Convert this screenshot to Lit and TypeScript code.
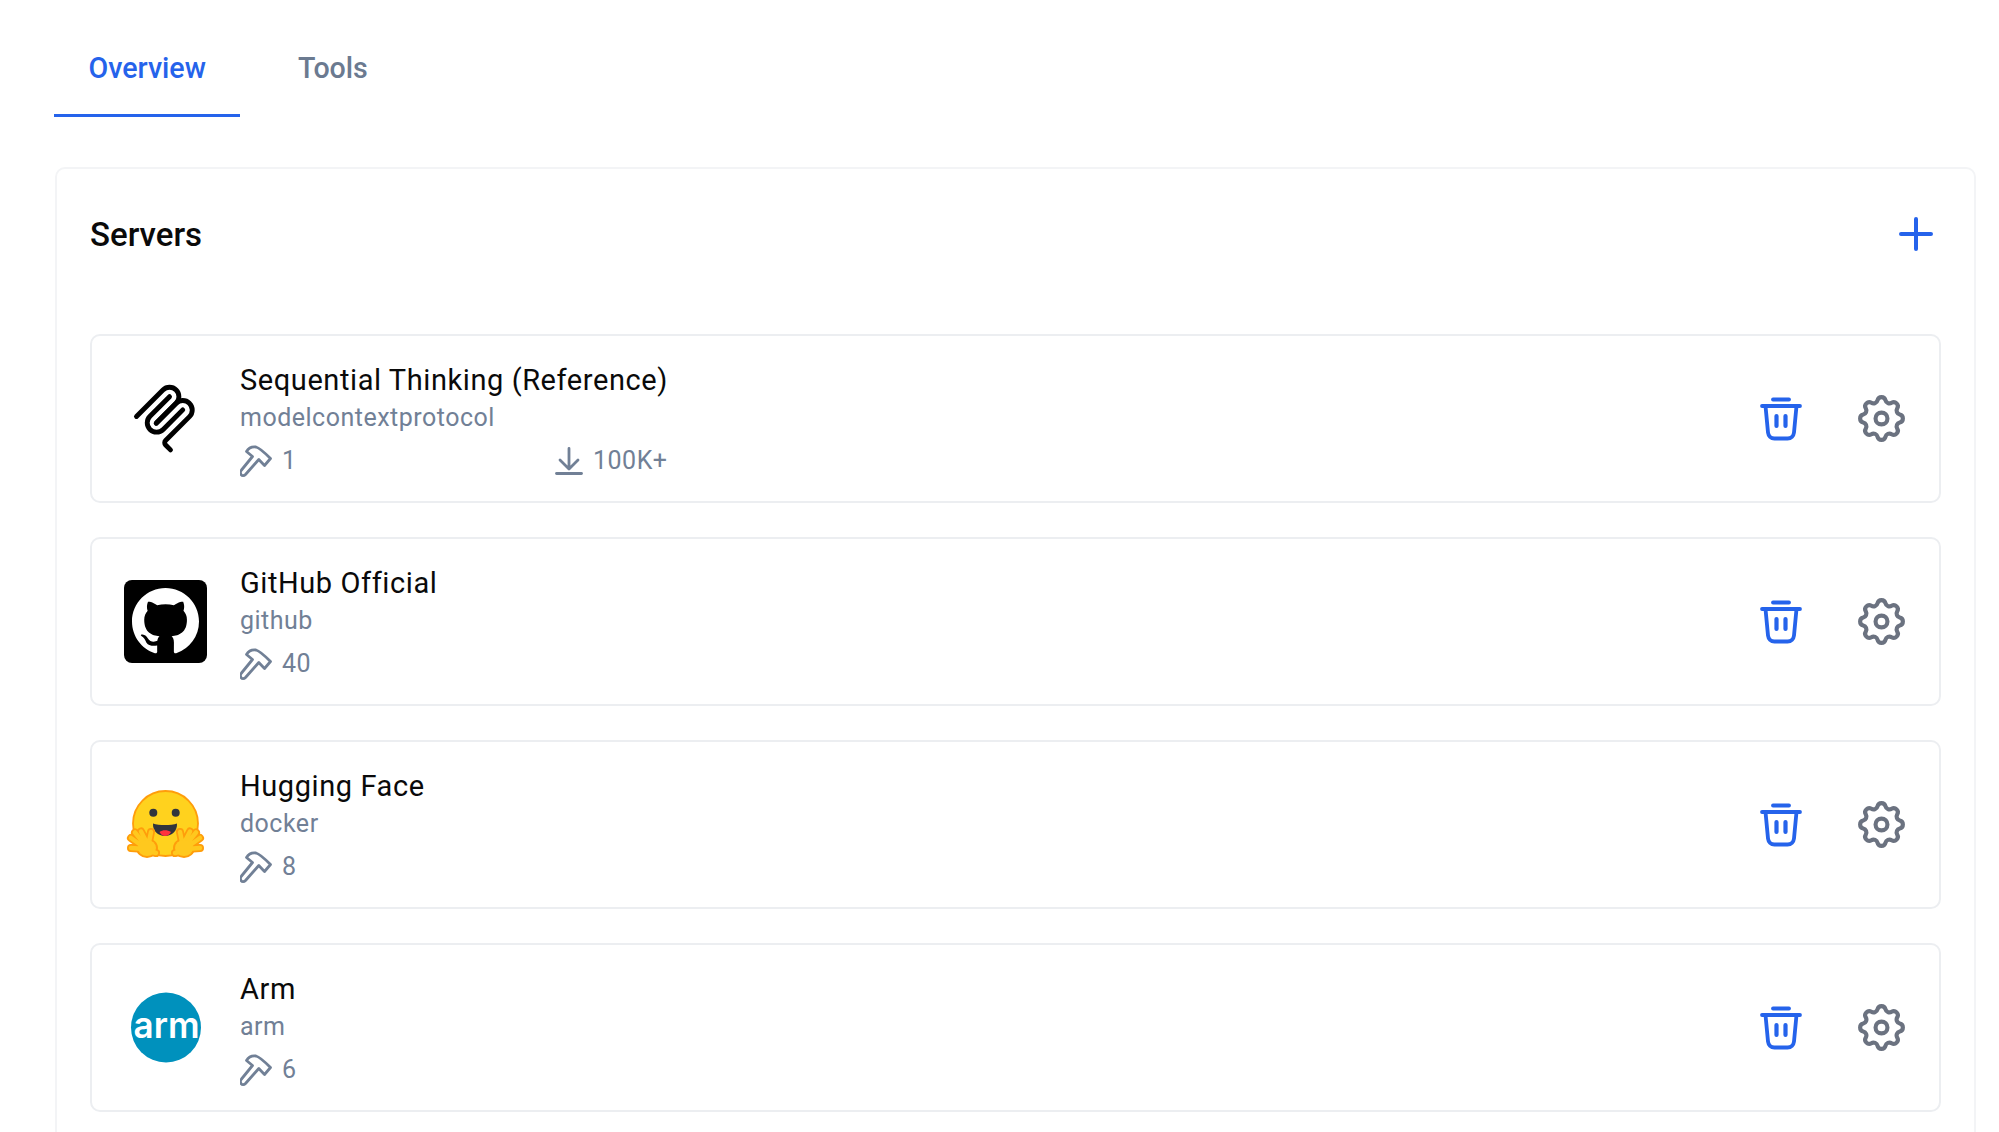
import { LitElement, html, css, svg } from 'lit'
import { customElement, property } from 'lit/decorators.js'

const hammerIcon = html`<svg class="meta-icon" viewBox="0 0 32 34" fill="none" stroke="currentColor" stroke-width="2.800" stroke-linejoin="round" stroke-linecap="round">
    <path d="M12.500 12.500 6.500 7.500c2-3.500 5.500-5 9.500-4.500 4 1 10 7 14.500 11.500l-6 7-5.700-6L5.500 30.500c-1.500 1.500-3.500 1.500-4.500 0s-.8-3 .5-4.500L12.500 12.500Z" />
</svg>`

const downloadIcon = html`<svg class="meta-icon download" viewBox="0 0 28 28" fill="none" stroke="currentColor" stroke-width="2.800" stroke-linecap="round" stroke-linejoin="round">
    <path d="M14 1.500v20M5 13l9 9 9-9" />
    <path d="M1.500 26.500h25" />
</svg>`

const trashIcon = html`<svg class="trash" viewBox="0 0 42 44" fill="none" stroke="currentColor" stroke-width="3.800" stroke-linecap="round" stroke-linejoin="round">
    <path d="M13 2.500h16" />
    <path d="M2 9h38" />
    <path d="M5.500 9 8 35.500c.4 3.500 2.800 6 6.500 6h13c3.700 0 6.100-2.500 6.500-6L36.500 9" />
    <path d="M16.500 19v10M25.500 19v10" stroke-width="4.200" />
</svg>`

const gearIcon = html`<svg class="gear" viewBox="0 0 24 24" fill="none" stroke="currentColor" stroke-width="1.750" stroke-linecap="round" stroke-linejoin="round">
    <path d="M10.325 4.317c.426-1.756 2.924-1.756 3.350 0a1.724 1.724 0 0 0 2.573 1.066c1.543-.94 3.310.826 2.370 2.370a1.724 1.724 0 0 0 1.065 2.572c1.756.426 1.756 2.924 0 3.350a1.724 1.724 0 0 0-1.066 2.573c.94 1.543-.826 3.310-2.370 2.370a1.724 1.724 0 0 0-2.572 1.065c-.426 1.756-2.924 1.756-3.350 0a1.724 1.724 0 0 0-2.573-1.066c-1.543.94-3.310-.826-2.370-2.370a1.724 1.724 0 0 0-1.065-2.572c-1.756-.426-1.756-2.924 0-3.350a1.724 1.724 0 0 0 1.066-2.573c-.94-1.543.826-3.310 2.370-2.370 1 .608 2.296.07 2.572-1.065Z" />
    <circle cx="12" cy="12" r="2.500" />
</svg>`

const plusIcon = html`<svg class="plus" viewBox="0 0 34 34" fill="none" stroke="currentColor" stroke-width="4" stroke-linecap="round">
    <path d="M17 2v30M2 17h30" />
</svg>`

const mcpLogo = html`<svg class="logo" viewBox="-7 -3.500 213 213" fill="none" stroke="#000" stroke-width="12.500" stroke-linecap="round">
    <path d="M25 97.853 92.882 29.971c9.373-9.373 24.569-9.373 33.941 0 9.373 9.372 9.373 24.568 0 33.941L75.558 115.177" />
    <path d="M76.265 114.47 126.823 63.912c9.373-9.373 24.569-9.373 33.942 0l.353.353c9.373 9.373 9.373 24.569 0 33.941L99.725 159.6c-3.124 3.124-3.124 8.189 0 11.313l12.606 12.607" />
    <path d="M109.853 46.941 59.648 97.146c-9.372 9.372-9.372 24.568 0 33.941 9.373 9.372 24.569 9.372 33.941 0l50.205-50.205" />
</svg>`

const githubLogo = html`<div class="github-tile">
    <svg viewBox="0 0 16 16" fill="#fff">
        <path d="M8 0C3.580 0 0 3.580 0 8c0 3.540 2.290 6.530 5.470 7.590.4.070.55-.17.55-.38 0-.19-.01-.82-.01-1.490-2.010.37-2.530-.49-2.690-.94-.09-.23-.48-.94-.82-1.130-.28-.15-.68-.52-.01-.53.63-.01 1.080.58 1.230.82.72 1.210 1.870.87 2.330.66.07-.52.28-.87.51-1.070-1.780-.2-3.640-.89-3.640-3.950 0-.87.31-1.590.82-2.150-.08-.2-.36-1.020.08-2.120 0 0 .67-.21 2.200.82.64-.18 1.320-.27 2-.27.68 0 1.360.09 2 .27 1.530-1.040 2.200-.82 2.200-.82.44 1.100.16 1.920.08 2.120.51.56.82 1.270.82 2.150 0 3.070-1.870 3.750-3.650 3.950.29.25.54.73.54 1.480 0 1.070-.01 1.930-.01 2.200 0 .21.15.46.55.38A8.013 8.013 0 0 0 16 8c0-4.420-3.580-8-8-8Z" />
    </svg>
</div>`

// fingers of the left hand, the right one is mirrored
const fingers = 'M21 65 7 55M21 66 7 65M22 63 11 49.500M24 62 17 48.500M24 64 27 49M20 67 32 70'
const hand = svg`
    <path d=${fingers} fill="none" stroke="#ff9d0b" stroke-width="8" stroke-linecap="round" />
    <ellipse cx="23" cy="65" rx="11" ry="10" fill="#ff9d0b" />
    <path d=${fingers} fill="none" stroke="#ffc81e" stroke-width="4.500" stroke-linecap="round" />
    <ellipse cx="23" cy="65" rx="9" ry="8" fill="#ffc81e" />`

const huggingLogo = html`<svg class="logo" viewBox="0 0 83 83">
    <circle cx="41.500" cy="40.500" r="32.500" fill="#ffd21e" stroke="#ff9d0b" stroke-width="1.800" />
    <circle cx="29.300" cy="29.800" r="4" fill="#32343d" />
    <circle cx="51.700" cy="29.800" r="4" fill="#32343d" />
    <path d="M29 40.500c6 2 18 2 24 0 .5 7.500-5 12.500-12 12.500s-12.500-5-12-12.500Z" fill="#32343d" />
    <path d="M35.500 49c3-2.500 8-2.500 11.500 0-1.500 2.500-3.500 4-6 4s-4-1.500-5.500-4Z" fill="#ff323d" />
    ${hand}
    <g transform="translate(83 0) scale(-1 1)">${hand}</g>
</svg>`

const armLogo = html`<svg class="logo" viewBox="0 0 83 83">
    <circle cx="42" cy="41.500" r="35" fill="#0091bd" />
    <text x="9.500" y="51.500" textLength="66" lengthAdjust="spacingAndGlyphs" class="arm-text">arm</text>
</svg>`

interface Server {
    name: string
    owner: string
    tools: number
    downloads?: string
    logo: unknown
}

const servers: Server[] = [
    { name: 'Sequential Thinking (Reference)', owner: 'modelcontextprotocol', tools: 1, downloads: '100K+', logo: mcpLogo },
    { name: 'GitHub Official', owner: 'github', tools: 40, logo: githubLogo },
    { name: 'Hugging Face', owner: 'docker', tools: 8, logo: huggingLogo },
    { name: 'Arm', owner: 'arm', tools: 6, logo: armLogo },
]

@customElement('app-server-row')
export class AppServerRow extends LitElement {
    @property({ attribute: false }) server!: Server

    static styles = css`
        :host {
            display: flex;
            align-items: center;
            height: 169px;
            box-sizing: border-box;
            padding: 0 33px 0 32px;
            border: 2px solid #eceef1;
            border-radius: 10px;
            background: #fff;
        }

        .logo-box {
            width: 83px;
            height: 83px;
            margin-right: 33px;
            flex: none;
        }

        .logo {
            display: block;
            width: 83px;
            height: 83px;
        }

        .github-tile {
            width: 83px;
            height: 83px;
            box-sizing: border-box;
            padding: 8px;
            background: #000;
            border-radius: 8px;
        }

        .github-tile svg {
            display: block;
            width: 67px;
            height: 67px;
        }

        .arm-text {
            font-family: 'Inter', sans-serif;
            font-weight: 600;
            font-size: 36px;
            fill: #fff;
        }

        .info {
            flex: 1;
            display: flex;
            flex-direction: column;
            padding-top: 5px;
        }

        .name {
            font-size: 29px;
            line-height: 40px;
            color: #0a0a0a;
            letter-spacing: 0.58px;
        }

        .owner {
            font-size: 25px;
            line-height: 36px;
            color: #718096;
            letter-spacing: 0.5px;
        }

        .meta {
            display: flex;
            align-items: center;
            height: 44px;
            margin-top: 3px;
            font-size: 25px;
            color: #718096;
            letter-spacing: 0.5px;
        }

        .stat {
            display: flex;
            align-items: center;
            gap: 10px;
        }

        .tools {
            width: 315px;
        }

        .meta-icon {
            width: 32px;
            height: 34px;
            flex: none;
        }

        .meta-icon.download {
            width: 28px;
            height: 28px;
        }

        .actions {
            display: flex;
            align-items: center;
            gap: 58px;
            margin-right: 3px;
        }

        .trash {
            width: 42px;
            height: 44px;
            color: #2563eb;
        }

        .gear {
            width: 57px;
            height: 57px;
            margin: -7px;
            color: #6b7280;
        }
    `

    render() {
        const s = this.server
        return html`
            <div class="logo-box">${s.logo}</div>
            <div class="info">
                <div class="name">${s.name}</div>
                <div class="owner">${s.owner}</div>
                <div class="meta">
                    <span class="stat tools">${hammerIcon} ${s.tools}</span>
                    ${s.downloads
                        ? html`<span class="stat">${downloadIcon} ${s.downloads}</span>`
                        : ''}
                </div>
            </div>
            <div class="actions">
                ${trashIcon}
                ${gearIcon}
            </div>
        `
    }
}

@customElement('app-root')
export class AppRoot extends LitElement {
    static styles = css`
        :host {
            display: block;
            height: 1132px;
            overflow: hidden;
            background: #fff;
            font-family: 'Roboto', sans-serif;
        }

        .tabs {
            display: flex;
            margin-left: 54px;
            height: 117px;
        }

        .tab {
            box-sizing: border-box;
            padding: 48px 34.5px 0;
            font-size: 28.6px;
            line-height: 40px;
            font-weight: 500;
            color: #6b7a90;
            margin-right: 23px;
        }

        .tab.active {
            color: #2563eb;
            border-bottom: 3px solid #2563eb;
        }

        .panel {
            margin: 50px 23px 0 55px;
            padding: 0 33px;
            border: 2px solid #f3f4f6;
            border-radius: 10px;
            background: #fff;
        }

        .panel-head {
            display: flex;
            align-items: center;
            justify-content: space-between;
            height: 130px;
            padding: 0 8px 35px 0;
        }

        h2 {
            margin: 0;
            font-size: 33px;
            font-weight: 500;
            color: #0a0a0a;
        }

        .plus {
            width: 34px;
            height: 34px;
            color: #2563eb;
        }

        .list {
            display: flex;
            flex-direction: column;
            gap: 34px;
            padding-bottom: 34px;
        }
    `

    render() {
        return html`
            <div class="tabs">
                <div class="tab active">Overview</div>
                <div class="tab">Tools</div>
            </div>
            <section class="panel">
                <div class="panel-head">
                    <h2>Servers</h2>
                    ${plusIcon}
                </div>
                <div class="list">
                    ${servers.map((s) => html`<app-server-row .server=${s}></app-server-row>`)}
                </div>
            </section>
        `
    }
}
